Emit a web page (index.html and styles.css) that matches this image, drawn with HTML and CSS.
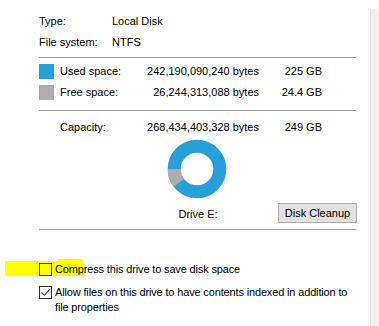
FILE: index.html
```html
<!DOCTYPE html>
<html>
<head>
<meta charset="utf-8">
<link rel="stylesheet" href="styles.css">
</head>
<body>
<div class="page">
  <div class="content">
    <div class="info">
      <div class="info-row"><span class="info-label">Type:</span><span>Local Disk</span></div>
      <div class="info-row"><span class="info-label">File system:</span><span>NTFS</span></div>
    </div>
    <div class="sep sep-1"></div>
    <div class="space">
      <span class="swatch used"></span><span>Used space:</span><span class="num">242,190,090,240 bytes</span><span class="num">225 GB</span>
      <span class="swatch free"></span><span>Free space:</span><span class="num">26,244,313,088 bytes</span><span class="num">24.4 GB</span>
    </div>
    <div class="sep sep-2"></div>
    <div class="space capacity">
      <span></span><span>Capacity:</span><span class="num">268,434,403,328 bytes</span><span class="num">249 GB</span>
    </div>
    <div class="chart">
      <svg width="60" height="60" viewBox="0 0 60 60">
        <circle cx="30" cy="30" r="22.8" fill="none" stroke="#26a0da" stroke-width="13"/>
        <circle cx="30" cy="30" r="22.8" fill="none" stroke="#adadad" stroke-width="13" stroke-dasharray="14.5 200" transform="rotate(143 30 30)"/>
      </svg>
    </div>
    <div class="drive-row">
      <span></span>
      <span class="drive-label">Drive E:</span>
      <button class="btn">Disk Cleanup</button>
    </div>
    <div class="sep sep-3"></div>
    <div class="checks">
      <div class="check-row compress">
        <span class="highlight"></span>
        <span class="box"></span>
        <span class="label">Compress this drive to save disk space</span>
      </div>
      <div class="check-row">
        <span class="box">
          <svg width="11" height="11" viewBox="0 0 11 11"><polyline points="1.5,5.5 4.3,8.3 9.7,2.3" fill="none" stroke="#444" stroke-width="1.1"/></svg>
        </span>
        <span class="label">Allow files on this drive to have contents indexed in addition to file properties</span>
      </div>
    </div>
  </div>
  <div class="strip"></div>
</div>
</body>
</html>
```
FILE: styles.css
```css
html, body {
  margin: 0;
  padding: 0;
  background: #ffffff;
}
body {
  font-family: "Liberation Sans", Arial, sans-serif;
  font-size: 11px;
  line-height: 15px;
  color: #000;
}
.page {
  display: flex;
  width: 379px;
  height: 326px;
  overflow: hidden;
}
.content {
  width: 370px;
  flex: none;
  padding: 14px 0 0 39px;
  box-sizing: border-box;
}
.strip {
  flex: 1;
  margin-top: 9px;
  background: #f0f0f0;
  border-left: 1px solid #e6e6e6;
}
.info {
  display: flex;
  flex-direction: column;
  gap: 6px;
}
.info-row {
  display: grid;
  grid-template-columns: 73px auto;
}
.sep {
  width: 317px;
  height: 1px;
  background: #a0a0a0;
}
.sep-1 { margin-top: 7px; }
.space {
  display: grid;
  grid-template-columns: 21px 80px 119px 63px;
  row-gap: 6px;
  margin-top: 6px;
  align-items: center;
  white-space: nowrap;
}
.num { text-align: right; }
.swatch {
  width: 15px;
  height: 15px;
  display: block;
}
.swatch.used { background: #26a0da; }
.swatch.free { background: #adadad; }
.sep-2 { margin-top: 10px; }
.capacity { margin-top: 9px; }
.chart {
  width: 317px;
  display: flex;
  justify-content: center;
  margin-top: 4px;
}
.chart svg { display: block; margin-left: -1px; }
.drive-row {
  width: 318px;
  display: grid;
  grid-template-columns: 1fr auto 1fr;
  align-items: end;
  margin-top: 4px;
}
.drive-label {
  margin-bottom: 1px;
}
.btn {
  justify-self: end;
  font: inherit;
  width: 79px;
  height: 20px;
  padding: 0;
  background: #e1e1e1;
  border: 1px solid #adadad;
  color: #000;
  line-height: 16px;
}
.sep-3 { margin-top: 6px; }
.checks {
  margin-top: 32px;
  display: flex;
  flex-direction: column;
  gap: 8px;
}
.check-row {
  display: grid;
  grid-template-columns: 16px 300px;
  align-items: start;
  position: relative;
}
.box {
  width: 13px;
  height: 13px;
  box-sizing: border-box;
  border: 1px solid #333;
  background: transparent;
  display: flex;
  align-items: center;
  justify-content: center;
  margin-top: 1px;
  position: relative;
  z-index: 1;
}
.label {
  position: relative;
  z-index: 1;
  letter-spacing: -0.15px;
}
.highlight {
  position: absolute;
  z-index: 0;
  left: -34px;
  top: -1px;
  width: 78px;
  height: 15px;
  background: #ffff00;
}
.highlight::after {
  content: "";
  position: absolute;
  left: 53px;
  top: -2px;
  width: 25px;
  height: 2px;
  background: #ffff00;
}
```
